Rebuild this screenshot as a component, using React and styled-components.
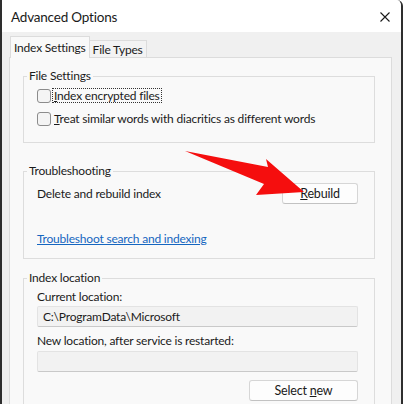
import React from "react";
import styled, { createGlobalStyle } from "styled-components";

const GlobalStyle = createGlobalStyle`
  html, body {
    margin: 0;
    padding: 0;
    background: #ffffff;
  }
  body {
    font-family: "Lato", "Noto Sans", sans-serif;
    font-size: 12px;
    letter-spacing: -0.2px;
    color: #1b1b1b;
  }
`;

function App() {
  return (
    <>
      <GlobalStyle />
      <Window>
        <TitleBar>
          <Title>Advanced Options</Title>
          <CloseIcon viewBox="0 0 10 10">
            <path d="M0.5 0.5 L9.5 9.5 M9.5 0.5 L0.5 9.5" />
          </CloseIcon>
        </TitleBar>

        <Body>
          <Tabs>
            <Tab $active>Index Settings</Tab>
            <Tab>File Types</Tab>
          </Tabs>

          <Panel>
            <Group $gap={0}>
              <Legend>File Settings</Legend>
              <CheckRow>
                <Box />
                <CheckLabel $focused>
                  <U>I</U>ndex encrypted files
                </CheckLabel>
              </CheckRow>
              <CheckRow>
                <Box />
                <CheckLabel>
                  <U>T</U>reat similar words with diacritics as different words
                </CheckLabel>
              </CheckRow>
            </Group>

            <Group $gap={20} $pad="4px 16px 11px 13px">
              <Legend>Troubleshooting</Legend>
              <ActionRow>
                <span>Delete and rebuild index</span>
                <Button $width={76}>
                  <U>R</U>ebuild
                </Button>
              </ActionRow>
              <Link href="#">Troubleshoot search and indexing</Link>
            </Group>

            <Group $gap={11} $pad="3px 16px 20px 13px">
              <Legend>Index location</Legend>
              <FieldLabel>Current location:</FieldLabel>
              <Field>C:\ProgramData\Microsoft</Field>
              <FieldLabel $top={6}>New location, after service is restarted:</FieldLabel>
              <Field $top={2} />
              <ButtonRow>
                <Button $width={109}>
                  Select <U>n</U>ew
                </Button>
              </ButtonRow>
            </Group>
          </Panel>
        </Body>

        <Arrow viewBox="0 0 403 404">
          <polygon points="185,151 268,167 266,159 304,192 256,195 264,184" />
        </Arrow>
      </Window>
    </>
  );
}

const Window = styled.div`
  position: relative;
  width: 403px;
  height: 404px;
  box-sizing: border-box;
  border-left: 2px solid #2e2e2e;
  border-right: 2px solid #2e2e2e;
  border-top-right-radius: 6px;
  background: #f0f0f0;
  overflow: hidden;
  display: flex;
  flex-direction: column;
`;

const TitleBar = styled.div`
  height: 32px;
  flex: none;
  background: #ffffff;
  display: flex;
  align-items: center;
  justify-content: space-between;
  padding: 2px 11px 0 9px;
  box-sizing: border-box;
`;

const Title = styled.span`
  font-size: 13.5px;
  color: #1a1a1a;
`;

const CloseIcon = styled.svg`
  width: 10px;
  height: 10px;
  stroke: #1a1a1a;
  stroke-width: 1.1;
  fill: none;
`;

const Body = styled.div`
  flex: 1;
  display: flex;
  flex-direction: column;
  padding: 5px 9px 0 7px;
  min-height: 0;
`;

const Tabs = styled.div`
  display: flex;
  align-items: flex-end;
  height: 21px;
  padding-left: 1px;
  position: relative;
  z-index: 1;
  margin-bottom: -1px;
`;

const Tab = styled.div`
  height: ${(p) => (p.$active ? "22px" : "18px")};
  box-sizing: border-box;
  display: flex;
  align-items: center;
  padding: 0 ${(p) => (p.$active ? "3px" : "3px")};
  font-size: 12px;
  background: ${(p) => (p.$active ? "#f9f9f9" : "#f3f3f3")};
  border: 1px solid #dcdcdc;
  border-bottom: ${(p) => (p.$active ? "none" : "1px solid #dcdcdc")};
  border-left: ${(p) => (p.$active ? "1px solid #dcdcdc" : "none")};
`;

const Panel = styled.div`
  flex: 1;
  background: #f9f9f9;
  border: 1px solid #dcdcdc;
  padding: 10px 16px 0 13px;
`;

const Group = styled.fieldset`
  margin: ${(p) => p.$gap}px 0 0 0;
  padding: ${(p) => p.$pad || "0 16px 12px 13px"};
  border: 1px solid #dddddd;
  border-radius: 0;
  display: flex;
  flex-direction: column;
  min-width: 0;
`;

const Legend = styled.legend`
  padding: 0 2px;
  margin-left: -10px;
  line-height: 16px;
  font-size: 12px;
`;

const CheckRow = styled.label`
  display: flex;
  align-items: center;
  height: 23px;
`;

const Box = styled.span`
  width: 14px;
  height: 14px;
  box-sizing: border-box;
  border: 1px solid #8c8c8c;
  border-radius: 3px;
  background: #f4f4f4;
  flex: none;
`;

const CheckLabel = styled.span`
  margin-left: 1px;
  padding: 0 1px;
  line-height: 13px;
  border: 1px ${(p) => (p.$focused ? "dotted #333" : "solid transparent")};
`;

const U = styled.span`
  text-decoration: underline;
`;

const ActionRow = styled.div`
  display: flex;
  align-items: center;
  justify-content: space-between;
  height: 21px;
`;

const Button = styled.button`
  width: ${(p) => p.$width}px;
  height: 21px;
  box-sizing: border-box;
  background: #fdfdfd;
  border: 1px solid #d6d6d6;
  border-bottom-color: #c2c2c2;
  border-radius: 3px;
  font-family: inherit;
  font-size: 12.5px;
  letter-spacing: -0.2px;
  color: #1a1a1a;
  padding: 0;
`;

const Link = styled.a`
  margin-top: 27px;
  line-height: 16px;
  color: #1566c0;
  text-decoration: underline;
  align-self: flex-start;
`;

const FieldLabel = styled.div`
  margin-top: ${(p) => p.$top || 0}px;
  line-height: 16px;
`;

const Field = styled.div`
  margin-top: ${(p) => p.$top || 1}px;
  height: 21px;
  box-sizing: border-box;
  background: #f2f2f2;
  border: 1px solid #e3e3e3;
  border-bottom-color: #c9c9c9;
  border-radius: 2px;
  padding-left: 5px;
  display: flex;
  align-items: center;
`;

const ButtonRow = styled.div`
  display: flex;
  justify-content: flex-end;
  margin-top: 8px;
`;

const Arrow = styled.svg`
  position: absolute;
  left: -2px;
  top: 0;
  width: 403px;
  height: 404px;
  pointer-events: none;
  fill: #f50e0e;
`;

export default App;
